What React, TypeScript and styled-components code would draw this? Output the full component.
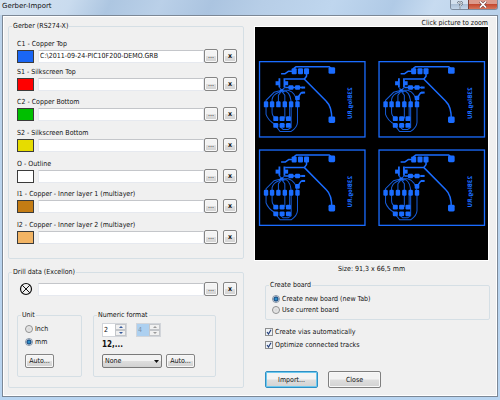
import React from "react";
import styled, { createGlobalStyle } from "styled-components";

const GlobalStyle = createGlobalStyle`
  *, *::before, *::after { box-sizing: border-box; }
  body {
    margin: 0;
    background: #b9d3ee;
    color: #111;
    font: 7px/10px "DejaVu Sans Condensed", "DejaVu Sans", Tahoma, sans-serif;
  }
  button, input, select { font: inherit; color: inherit; margin: 0; padding: 0; }
`;

const Window = styled.div`
  display: flex;
  flex-direction: column;
  min-height: 100vh;
  padding: 0 2px 3px;
  background: linear-gradient(180deg, #bcd3ea, #b9d5f1);
`;

const TitleBar = styled.header`
  display: flex;
  justify-content: space-between;
  align-items: flex-start;
  height: 15px;
  margin: 0 -2px;
  padding: 0 2px;
  background: linear-gradient(
    115deg,
    #d5e3f1 0%,
    #c9dbee 14%,
    #adc6e1 22%,
    #bad0e8 32%,
    #abc4e0 42%,
    #b7cee7 52%,
    #bfd6ee 66%,
    #b0cae6 78%,
    #c7dbf0 86%,
    #b9d1ea 100%
  );
`;

const Title = styled.h1`
  margin: 0;
  font: 7px/13px "DejaVu Sans", "Segoe UI", sans-serif;
`;

const Caption = styled.div`
  display: flex;
  border: 1px solid #7d8b9d;
  border-top: 0;
  border-radius: 0 0 3px 3px;
  overflow: hidden;
`;

const CaptionButton = styled.button<{ $danger?: boolean }>`
  display: grid;
  place-items: center;
  width: ${(p) => (p.$danger ? 29 : 17)}px;
  height: 9px;
  border: 0;
  border-left: ${(p) => (p.$danger ? "1px solid #7b4038" : "0")};
  background: ${(p) =>
    p.$danger
      ? "linear-gradient(180deg, #dc9a8c 0 40%, #c2452c 45%, #d5745a)"
      : "linear-gradient(180deg, #d3e0ee 0 40%, #a9bdd4 45%, #c4d6e9)"};
`;

const Client = styled.main`
  flex: 1;
  display: grid;
  grid-template-columns: 236fr 235fr;
  column-gap: 11px;
  padding: 3px 7px 8px 5px;
  background: #f0f0f0;
  border: 1px solid #7c8896;
  box-shadow: inset 0 0 0 1px #fff;
`;

const Column = styled.div`
  display: flex;
  flex-direction: column;
  min-width: 0;
`;

const LeftColumn = styled(Column)`
  gap: 8px;
  padding-top: 2px;
`;

const Group = styled.fieldset`
  min-width: 0;
  margin: 0;
  padding: 0;
  border: 1px solid #d5dfe5;
  border-radius: 2px;
`;

const Legend = styled.legend`
  margin-left: 3px;
  padding: 0 1px;
  line-height: 10px;
`;

const LayerList = styled.div`
  display: grid;
  grid-template-rows: 28px 30px 31px 31px 30px 31px auto;
  padding: 9px 6px 14px 8px;
`;

const LayerLabel = styled.label`
  display: block;
  height: 9px;
  line-height: 9px;
`;

const FileField = styled.div`
  display: grid;
  grid-template-columns: 17px 1fr 33px;
  align-items: center;
  height: 14px;
`;

const Swatch = styled.span<{ $color: string }>`
  height: 13px;
  border: 1px solid #3b3b3b;
  background: ${(p) => p.$color};
`;

const PathInput = styled.input`
  min-width: 0;
  height: 13px;
  margin-left: 4px;
  padding: 0 1px;
  border: 1px solid #e6e9ef;
  border-top-color: #c4c6ca;
  background: #fff;
  outline: 0;
`;

const Button = styled.button`
  border: 1px solid #858585;
  border-radius: 2px;
  background: linear-gradient(180deg, #f3f3f3 0 48%, #dedede 52%, #d2d2d2);
  box-shadow: inset 0 0 0 1px #f8f8f8;
  text-align: center;
  white-space: nowrap;
`;

const SmallButton = styled(Button)<{ $bold?: boolean }>`
  height: 14px;
  line-height: 11px;
  font-weight: ${(p) => (p.$bold ? 700 : 400)};
`;

const FileButtons = styled.div`
  display: grid;
  grid-template-columns: 14px 14px;
  column-gap: 5px;
`;

const DrillGroup = styled(Group)`
  flex: 1;
`;

const DrillBody = styled.div`
  padding: 5px 6px 9px 8px;
`;

const DrillIcon = styled.svg`
  width: 14px;
  height: 14px;
  margin-left: 2px;
`;

const FormatRow = styled.div`
  display: grid;
  grid-template-columns: 65fr 123fr 10fr;
  column-gap: 11px;
  margin-top: 14px;
`;

const UnitBody = styled.div`
  padding: 4px 7px 8px;
`;

const NumericBody = styled.div`
  padding: 3px 20px 8px 8px;
`;

const Choice = styled.label<{ $gap: number }>`
  display: flex;
  align-items: center;
  gap: 2px;
  height: 10px;
  margin-bottom: ${(p) => p.$gap}px;
  white-space: nowrap;
`;

const Radio = styled.input`
  appearance: none;
  flex: none;
  width: 8px;
  height: 8px;
  border: 1px solid #8e8f8f;
  border-radius: 50%;
  background: radial-gradient(circle, #d6d6d6, #f4f4f4);
  &:checked {
    border-color: #8593a3;
    background: radial-gradient(circle, #2f8fc8 0 1px, #123e75 2px, #d9e6f2 3px);
  }
`;

const AutoButton = styled(Button)`
  width: 29px;
  height: 14px;
  line-height: 11px;
`;

const SpinRow = styled.div`
  display: flex;
  gap: 9px;
`;

const Spin = styled.div<{ $off?: boolean }>`
  display: flex;
  width: 25px;
  height: 14px;
  border: 1px solid #d2d5da;
  background: ${(p) => (p.$off ? "#f0f0f0" : "#fff")};
`;

const SpinInput = styled.input`
  flex: 1;
  min-width: 0;
  padding-left: 1px;
  border: 0;
  outline: 0;
  background: #fff;
  &:disabled { background: #add0f0; color: #7b90a6; }
`;

const SpinButtons = styled.div`
  display: grid;
  grid-template-rows: 1fr 1fr;
  width: 11px;
`;

const SpinButton = styled.button`
  display: grid;
  place-items: center;
  min-height: 0;
  border: 1px solid #c3c6ca;
  background: #f0f0f0;
  color: #33589b;
  &:disabled { color: #9a9a9a; }
`;

const Sample = styled.output`
  display: block;
  height: 17px;
  padding-top: 3px;
  font-size: 8px;
  font-weight: 700;
`;

const SelectRow = styled.div`
  display: flex;
  gap: 4px;
`;

const SelectBox = styled.div`
  display: grid;
  flex: 1;
  min-width: 0;
  align-items: center;
  & > * { grid-area: 1 / 1; }
`;

const Select = styled.select`
  appearance: none;
  width: 100%;
  height: 14px;
  padding-left: 2px;
  border: 1px solid #7a7a7a;
  border-radius: 2px;
  background: linear-gradient(180deg, #f3f3f3 0 48%, #dedede 52%, #d2d2d2);
`;

const Arrow = styled.svg`
  justify-self: end;
  width: 5px;
  height: 3px;
  margin-right: 3px;
  pointer-events: none;
`;

const Hint = styled.div`
  height: 8px;
  padding-right: 2px;
  line-height: 8px;
  text-align: right;
`;

const Preview = styled.button`
  display: block;
  margin: 0 2px 0 0;
  border: 0;
  background: #000;
  box-shadow: 0 0 0 1px #fff;
  cursor: zoom-in;
  svg { display: block; width: 100%; }
`;

const BoardSize = styled.p`
  margin: 4px 2px 6px 0;
  text-align: center;
`;

const BoardGroup = styled(Group)`
  margin-left: 10px;
`;

const BoardBody = styled.div`
  padding: 4px 6px 3px;
`;

const Options = styled.div`
  margin: 7px 0 0 10px;
`;

const Check = styled.input`
  appearance: none;
  flex: none;
  width: 8px;
  height: 8px;
  border: 1px solid #8e8f8f;
  background: #eef2f7;
  &:checked {
    background: #eef2f7
      url("data:image/svg+xml,%3Csvg xmlns='http://www.w3.org/2000/svg' viewBox='0 0 6 6'%3E%3Cpath d='M1 3l1.5 2L5 .7' fill='none' stroke='%23243f7a' stroke-width='1.2'/%3E%3C/svg%3E")
      center / 6px 6px no-repeat;
  }
`;

const Actions = styled.div`
  display: flex;
  gap: 10px;
  margin: auto 0 0 10px;
`;

const ActionButton = styled(Button)<{ $primary?: boolean }>`
  width: 53px;
  height: 17px;
  line-height: 14px;
  border-color: ${(p) => (p.$primary ? "#2f8fc4" : "#7f7f7f")};
  box-shadow: inset 0 0 0 1px ${(p) => (p.$primary ? "#6cc8ee" : "#f8f8f8")};
`;

const layers = [
  { id: "c1", label: "C1 - Copper Top", color: "#1a66f5", file: "C:\\2011-09-24-PIC10F200-DEMO.GRB" },
  { id: "s1", label: "S1 - Silkscreen Top", color: "#ff0000", file: "" },
  { id: "c2", label: "C2 - Copper Bottom", color: "#00bf00", file: "" },
  { id: "s2", label: "S2 - Silkscreen Bottom", color: "#e6dc00", file: "" },
  { id: "o", label: "O - Outline", color: "#ffffff", file: "" },
  { id: "i1", label: "I1 - Copper - Inner layer 1 (multiayer)", color: "#c47c14", file: "" },
  { id: "i2", label: "I2 - Copper - Inner layer 2 (multiayer)", color: "#f2b464", file: "" },
];

const FilePicker = ({ id, file, label, children }: { id: string; file: string; label?: string; children: React.ReactNode }) => (
  <FileField>
    {children}
    <PathInput id={id} type="text" defaultValue={file} aria-label={label} />
    <FileButtons>
      <SmallButton type="button" aria-label="Browse">...</SmallButton>
      <SmallButton type="button" aria-label="Clear" $bold>x</SmallButton>
    </FileButtons>
  </FileField>
);

const Spinner = ({ value, label, disabled }: { value: string; label: string; disabled?: boolean }) => (
  <Spin $off={disabled}>
    <SpinInput type="text" defaultValue={value} aria-label={label} disabled={disabled} />
    <SpinButtons>
      <SpinButton type="button" aria-label="Increase" disabled={disabled}>
        <svg width="4" height="2" viewBox="0 0 4 2"><path d="M0 2L2 0L4 2Z" fill="currentColor" /></svg>
      </SpinButton>
      <SpinButton type="button" aria-label="Decrease" disabled={disabled}>
        <svg width="4" height="2" viewBox="0 0 4 2"><path d="M0 0L2 2L4 0Z" fill="currentColor" /></svg>
      </SpinButton>
    </SpinButtons>
  </Spin>
);

const pinX = [7, 13, 19.3, 25.7, 32, 38.3];

const Board = ({ x, y }: { x: number; y: number }) => (
  <g transform={`translate(${x} ${y})`} fill="#1a6cff" stroke="#1a6cff">
    <rect x="0.5" y="0.5" width="105" height="75" fill="none" strokeWidth="1.3" />
    <g fill="none" strokeWidth="1.5" strokeLinejoin="round">
      <path d="M35 9V7L37 5.5H70L72.5 8" />
      <path d="M22 12.5H26L29.5 10H35" />
      <path d="M26 17.8H45L67 40Q72.5 45 72.5 58" />
      <path d="M45 18L47.3 15V10" />
      <path d="M20.3 17V26M25.3 17V26" strokeWidth="1.8" />
      <path d="M26 26.3H44M38.3 36.7L42 31.5H44" />
    </g>
    <g fill="none" strokeWidth="1" strokeOpacity="0.85">
      <path d="M7 43V39L15 31L22.5 29H29Q37 31 38.3 43" />
      <path d="M13 43V38Q14 33 20 31L23 28" />
      <path d="M19.3 43V34L24 28M25.7 43V34L21 28" />
      <path d="M23 30H27Q32 33 32 43" />
      <path d="M20 26L25 31M26 26L20 31" />
      <path d="M7 43V53Q9 59 16 63M13 43V51Q13 55 17 57M25.7 43V57" />
      <path d="M32 43V66L29 68H24L21 65" />
      <path d="M38.3 43V61Q38 66 32 70H21L17 65" />
      <path d="M30.5 43V57" />
    </g>
    <g stroke="none">
      {[35, 41.3, 47.3].map((cx) => <rect key={cx} x={cx - 2.5} y="7" width="5" height="6" rx="1" />)}
      {[9.3, 58.3].map((cy) => <rect key={cy} x="69.2" y={cy - 3.3} width="6.6" height="6.6" rx="1.4" />)}
      <rect x="16.5" y="20" width="4" height="4" />
      <rect x="25" y="20" width="4" height="4" />
      <rect x="29.3" y="24" width="5" height="4.6" rx="1" />
      <rect x="35.9" y="24" width="5" height="4.6" rx="1" />
      <rect x="42.3" y="25.3" width="3.6" height="2" />
      <rect x="42.3" y="30.3" width="3.6" height="2" />
      <rect x="36" y="34.4" width="4.6" height="4.6" rx="1" />
      {pinX.map((cx) => <rect key={cx} x={cx - 2.2} y="40" width="4.4" height="6" rx="1.2" />)}
      {[57.3, 64].map((cy) =>
        [16.7, 23, 29.3].map((cx) => <rect key={`${cx}-${cy}`} x={cx - 2.5} y={cy - 2.4} width="5" height="4.8" rx="1.2" />)
      )}
      <text transform="translate(88 26) rotate(90) scale(1 -1)" fontFamily="DejaVu Sans Condensed, sans-serif" fontSize="6" fontWeight="700" dominantBaseline="hanging">
        23Blog.RU
      </text>
    </g>
  </g>
);

export default function App() {
  return (
    <>
      <GlobalStyle />
      <Window>
        <TitleBar>
          <Title>Gerber-Import</Title>
          <Caption>
            <CaptionButton type="button" aria-label="Help">
              <svg width="6" height="8" viewBox="0 0 6 8" fill="none">
                <path d="M1 2.4Q1.2.9 3 .9T5 2.5Q5 3.5 3 4.3V5.3M3 6.2V7.6" stroke="#4d5b6c" strokeWidth="2" />
                <path d="M1 2.4Q1.2.9 3 .9T5 2.5Q5 3.5 3 4.3V5.3M3 6.2V7.6" stroke="#fff" />
              </svg>
            </CaptionButton>
            <CaptionButton type="button" aria-label="Close window" $danger>
              <svg width="8" height="7" viewBox="0 0 8 7" fill="none">
                <path d="M1 .5L7 6.5M7 .5L1 6.5" stroke="#6b3a3a" strokeWidth="2.8" />
                <path d="M1 .5L7 6.5M7 .5L1 6.5" stroke="#fff" strokeWidth="1.7" />
              </svg>
            </CaptionButton>
          </Caption>
        </TitleBar>
        <Client>
          <LeftColumn>
            <Group>
              <Legend>Gerber (RS274-X)</Legend>
              <LayerList>
                {layers.map((l) => (
                  <div key={l.id}>
                    <LayerLabel htmlFor={l.id}>{l.label}</LayerLabel>
                    <FilePicker id={l.id} file={l.file}>
                      <Swatch $color={l.color} />
                    </FilePicker>
                  </div>
                ))}
              </LayerList>
            </Group>
            <DrillGroup>
              <Legend>Drill data (Excellon)</Legend>
              <DrillBody>
                <FilePicker id="drill" file="" label="Drill data file">
                  <DrillIcon viewBox="0 0 14 14" fill="none" stroke="#111">
                    <circle cx="7" cy="7" r="5.5" strokeWidth="1.2" />
                    <path d="M3.2 3.2L10.8 10.8M10.8 3.2L3.2 10.8" />
                  </DrillIcon>
                </FilePicker>
                <FormatRow>
                  <Group>
                    <Legend>Unit</Legend>
                    <UnitBody>
                      <Choice $gap={3}><Radio type="radio" name="unit" />Inch</Choice>
                      <Choice $gap={7}><Radio type="radio" name="unit" defaultChecked />mm</Choice>
                      <AutoButton type="button">Auto...</AutoButton>
                    </UnitBody>
                  </Group>
                  <Group>
                    <Legend>Numeric format</Legend>
                    <NumericBody>
                      <SpinRow>
                        <Spinner value="2" label="Integer digits" />
                        <Spinner value="4" label="Decimal digits" disabled />
                      </SpinRow>
                      <Sample>12,...</Sample>
                      <SelectRow>
                        <SelectBox>
                          <Select aria-label="Zero suppression" defaultValue="None"><option>None</option></Select>
                          <Arrow viewBox="0 0 5 3"><path d="M0 0H5L2.5 3Z" fill="#111" /></Arrow>
                        </SelectBox>
                        <AutoButton type="button">Auto...</AutoButton>
                      </SelectRow>
                    </NumericBody>
                  </Group>
                </FormatRow>
              </DrillBody>
            </DrillGroup>
          </LeftColumn>
          <Column>
            <Hint>Click picture to zoom</Hint>
            <Preview type="button" aria-label="Zoom board preview">
              <svg viewBox="0 0 232 232">
                <Board x={4} y={34} />
                <Board x={123} y={34} />
                <Board x={4} y={122} />
                <Board x={123} y={122} />
              </svg>
            </Preview>
            <BoardSize>Size: 91,3 x 66,5 mm</BoardSize>
            <BoardGroup>
              <Legend>Create board</Legend>
              <BoardBody>
                <Choice $gap={1}><Radio type="radio" name="board" defaultChecked />Create new board (new Tab)</Choice>
                <Choice $gap={1}><Radio type="radio" name="board" />Use current board</Choice>
              </BoardBody>
            </BoardGroup>
            <Options>
              <Choice $gap={3}><Check type="checkbox" defaultChecked />Create vias automatically</Choice>
              <Choice $gap={3}><Check type="checkbox" defaultChecked />Optimize connected tracks</Choice>
            </Options>
            <Actions>
              <ActionButton type="button" $primary>Import...</ActionButton>
              <ActionButton type="button">Close</ActionButton>
            </Actions>
          </Column>
        </Client>
      </Window>
    </>
  );
}
